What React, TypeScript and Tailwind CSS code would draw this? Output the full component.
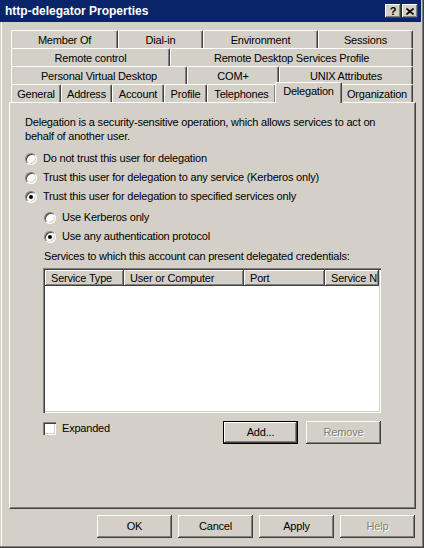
import React from 'react';

const raised =
  'bg-[#d4d0c8] shadow-[inset_-1px_-1px_0_#404040,inset_1px_1px_0_#ffffff,inset_-2px_-2px_0_#808080,inset_2px_2px_0_#d4d0c8]';
const sunken =
  'shadow-[inset_1px_1px_0_#808080,inset_2px_2px_0_#404040,inset_-1px_-1px_0_#ffffff,inset_-2px_-2px_0_#d4d0c8]';

function Tab({ label, w, selected }: { label: string; w: number; selected?: boolean }) {
  if (selected) {
    return (
      <div style={{ width: w }} className="relative z-10 h-full">
        <div className="absolute -left-[1px] -right-[1px] -top-[2px] h-[21px] bg-[#d4d0c8] border-t border-l border-white border-r border-r-[#404040] rounded-t-[2px] shadow-[inset_-1px_0_0_#808080] flex justify-center pt-[2px]">
          {label}
        </div>
      </div>
    );
  }
  return (
    <div
      style={{ width: w }}
      className="h-full shrink-0 border-t border-l border-white border-r border-r-[#404040] rounded-t-[2px] shadow-[inset_-1px_0_0_#808080] flex justify-center pt-[3px]"
    >
      {label}
    </div>
  );
}

function Radio({ checked, label }: { checked?: boolean; label: string }) {
  return (
    <div className="flex h-[13px] items-center gap-[6px]">
      <div className="relative w-[12px] h-[12px] rounded-full bg-white border border-[#808080] border-r-white border-b-white shadow-[inset_1px_1px_0_#404040,inset_-1px_-1px_0_#d4d0c8]">
        {checked && <div className="absolute left-[3px] top-[3px] w-[4px] h-[4px] rounded-full bg-black" />}
      </div>
      <span>{label}</span>
    </div>
  );
}

function Button({ label, disabled, def }: { label: string; disabled?: boolean; def?: boolean }) {
  return (
    <div
      className={`w-[75px] h-[23px] flex items-center justify-center ${raised} ${def ? 'border border-black' : ''} ${
        disabled ? 'text-[#808080] [text-shadow:1px_1px_0_#ffffff]' : ''
      }`}
    >
      {label}
    </div>
  );
}

export default function App() {
  const rows: { label: string; w: number; selected?: boolean }[][] = [
    [
      { label: 'Member Of', w: 107 },
      { label: 'Dial-in', w: 85 },
      { label: 'Environment', w: 115 },
      { label: 'Sessions', w: 95 },
    ],
    [
      { label: 'Remote control', w: 159 },
      { label: 'Remote Desktop Services Profile', w: 243 },
    ],
    [
      { label: 'Personal Virtual Desktop', w: 176 },
      { label: 'COM+', w: 92 },
      { label: 'UNIX Attributes', w: 134 },
    ],
    [
      { label: 'General', w: 50 },
      { label: 'Address', w: 51 },
      { label: 'Account', w: 52 },
      { label: 'Profile', w: 43 },
      { label: 'Telephones', w: 69 },
      { label: 'Delegation', w: 65, selected: true },
      { label: 'Organization', w: 72 },
    ],
  ];

  const columns = [
    { label: 'Service Type', w: 79 },
    { label: 'User or Computer', w: 120 },
    { label: 'Port', w: 81 },
    { label: 'Service N', w: 54 },
  ];

  return (
    <div className="w-[424px] h-[548px] bg-[#d4d0c8] overflow-hidden text-[11px] leading-[13px] tracking-[-0.2px] text-black font-['Liberation_Sans',Arial,sans-serif] shadow-[inset_-1px_-1px_0_#404040,inset_-2px_-2px_0_#808080,inset_1px_0_0_#d4d0c8,inset_2px_0_0_#ffffff]">
      {/* Title bar */}
      <div className="w-[421px] h-[22px] bg-[#0a246a] flex items-center justify-between pl-[5px] pr-[3px]">
        <span className="text-white font-bold text-[12px] tracking-normal">http-delegator Properties</span>
        <div className="flex gap-[1px]">
          <div className={`w-[16px] h-[14px] ${raised} flex items-center justify-center font-bold text-[11px] tracking-normal pt-[1px]`}>?</div>
          <div className={`w-[16px] h-[14px] ${raised} flex items-center justify-center`}>
            <svg width="8" height="7" viewBox="0 0 8 7">
              <path d="M0.5 0.5 L7.5 6.5 M7.5 0.5 L0.5 6.5" stroke="black" strokeWidth="1.6" />
            </svg>
          </div>
        </div>
      </div>

      {/* Tabs */}
      <div className="mt-[8px] ml-[9px] w-[407px]">
        {rows.map((row, i) => (
          <div key={i} className="flex h-[18px] pl-[2px]">
            {row.map((t) => (
              <Tab key={t.label} label={t.label} w={t.w} selected={t.selected} />
            ))}
          </div>
        ))}

        {/* Panel */}
        <div className="h-[407px] border-t border-l border-white border-r border-b border-r-[#404040] border-b-[#404040] shadow-[inset_-1px_-1px_0_#808080] pl-[15px] pt-[12px] flex flex-col">
          <p className="leading-[14px]">
            Delegation is a security-sensitive operation, which allows services to act on
            <br />
            behalf of another user.
          </p>
          <div className="mt-[9px]">
            <Radio label="Do not trust this user for delegation" />
          </div>
          <div className="mt-[6px]">
            <Radio label="Trust this user for delegation to any service (Kerberos only)" />
          </div>
          <div className="mt-[6px]">
            <Radio checked label="Trust this user for delegation to specified services only" />
          </div>
          <div className="mt-[8px] ml-[19px]">
            <Radio label="Use Kerberos only" />
          </div>
          <div className="mt-[6px] ml-[19px]">
            <Radio checked label="Use any authentication protocol" />
          </div>
          <div className="mt-[7px] ml-[19px] h-[13px]">Services to which this account can present delegated credentials:</div>

          {/* List view */}
          <div className={`mt-[5px] ml-[18px] w-[338px] h-[145px] bg-white p-[2px] ${sunken}`}>
            <div className="flex h-[16px] overflow-hidden">
              {columns.map((c) => (
                <div key={c.label} style={{ width: c.w }} className={`shrink-0 h-full ${raised} pl-[6px] pt-[2px] whitespace-nowrap overflow-hidden`}>
                  {c.label}
                </div>
              ))}
            </div>
          </div>

          {/* Expanded + buttons */}
          <div className="mt-[8px] ml-[18px] w-[338px] flex justify-between items-start">
            <div className="mt-[1px] flex items-center gap-[6px] h-[13px]">
              <div className={`w-[13px] h-[13px] bg-white ${sunken}`} />
              <span>Expanded</span>
            </div>
            <div className="flex gap-[8px]">
              <Button label="Add..." def />
              <Button label="Remove" disabled />
            </div>
          </div>
        </div>
      </div>

      {/* Dialog buttons */}
      <div className="mt-[6px] pl-[97px] flex gap-[6px]">
        <Button label="OK" />
        <Button label="Cancel" />
        <Button label="Apply" />
        <Button label="Help" disabled />
      </div>
    </div>
  );
}
